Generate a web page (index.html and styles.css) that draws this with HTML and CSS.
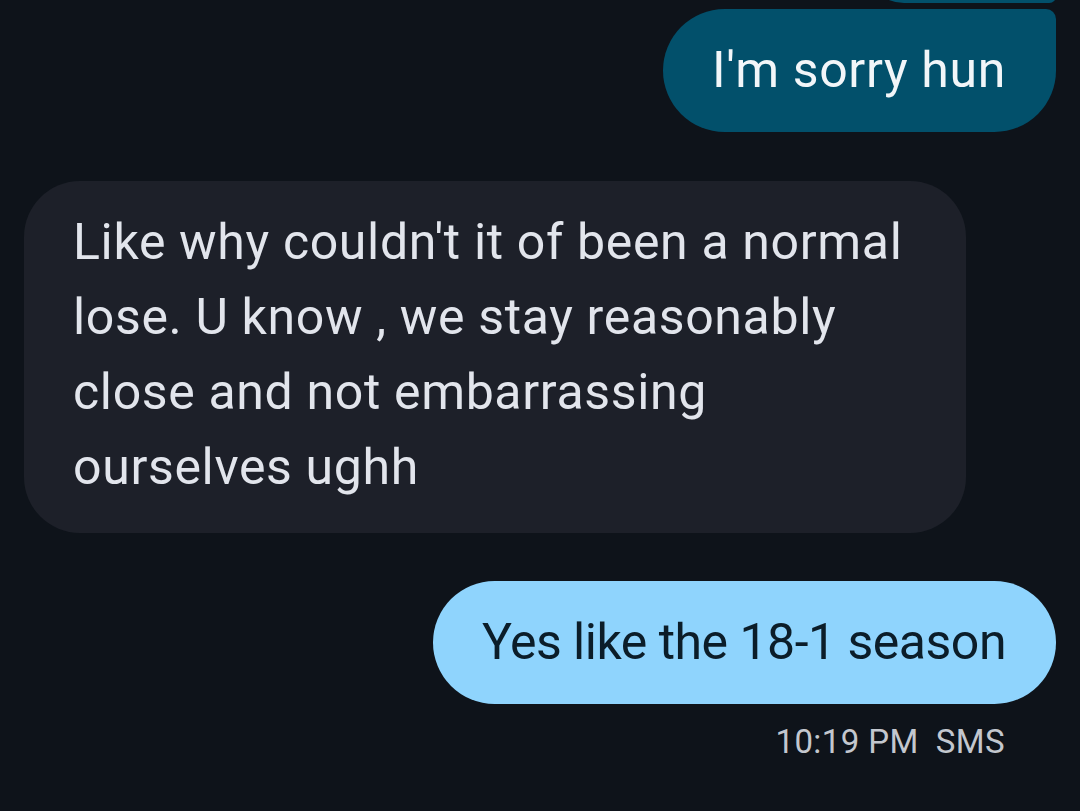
FILE: index.html
```html
<!DOCTYPE html>
<html>
<head>
<meta charset="utf-8">
<link rel="stylesheet" href="styles.css">
</head>
<body>
<div class="thread">
  <div class="bubble sent prev" aria-hidden="true"></div>
  <div class="bubble sent last">I'm sorry hun</div>
  <div class="bubble recv">Like why couldn't it of been a normal lose. U know , we stay reasonably close and not embarrassing ourselves ughh</div>
  <div class="bubble sent-light">Yes like the 18-1 season</div>
  <div class="meta">10:19 PM&nbsp; SMS</div>
</div>
</body>
</html>
```
FILE: styles.css
```css
html, body {
  margin: 0;
  padding: 0;
  background: #0e131a;
  height: 100%;
  overflow: hidden;
}
body {
  font-family: Roboto, "Noto Sans", sans-serif;
}
.thread {
  display: flex;
  flex-direction: column;
  align-items: flex-end;
  padding: 0 24px;
}
.bubble {
  box-sizing: border-box;
  font-size: 50px;
  line-height: 75px;
  letter-spacing: 0.65px;
  padding: 24px 50px 24px 49px;
}
.sent {
  background: #02506b;
  color: #f2f6f9;
}
.prev {
  width: 192px;
  height: 80px;
  margin-top: -77px;
  padding: 0;
  border-radius: 60px 60px 10px 60px;
}
.last {
  margin-top: 6px;
  border-radius: 62px 10px 62px 62px;
}
.recv {
  align-self: flex-start;
  background: #1d2029;
  color: #e2e5ec;
  margin-top: 49px;
  width: 942px;
  padding: 24px 49px 28px;
  border-radius: 56px;
}
.sent-light {
  margin-top: 48px;
  background: #8fd4fd;
  color: #0b1d29;
  letter-spacing: -0.5px;
  border-radius: 62px;
}
.meta {
  margin-top: 18px;
  margin-right: 51px;
  font-size: 33px;
  line-height: 40px;
  letter-spacing: 0.4px;
  color: #c3c7ce;
}
```
